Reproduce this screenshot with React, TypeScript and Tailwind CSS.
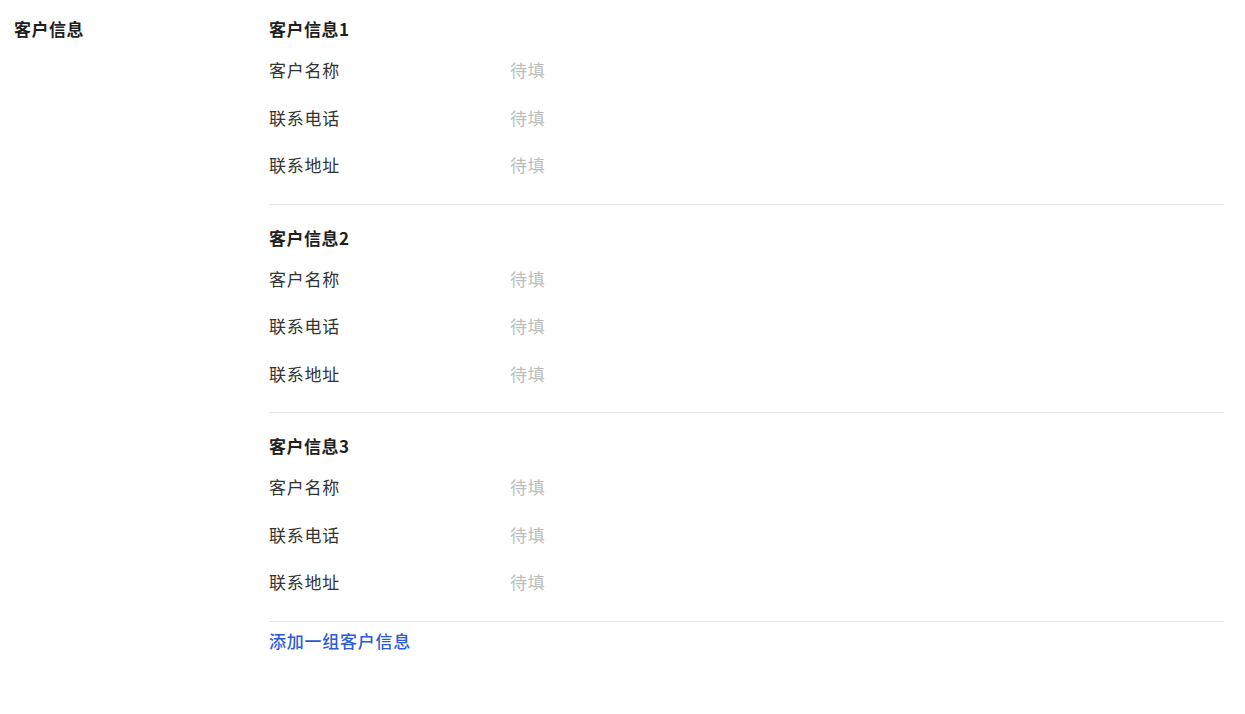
const customers = [1, 2, 3];
const fields = ["客户名称", "联系电话", "联系地址"];

export default function App() {
  return (
    <div
      className="min-h-[714px] bg-white pl-[14px] pr-[21px] pt-[17px] text-[17px]"
      style={{ fontFamily: '"Noto Sans CJK SC", "Noto Sans", sans-serif' }}
    >
      <div className="flex">
        {/* 左侧标题 */}
        <div className="w-[255px] shrink-0 h-6 leading-6 font-semibold tracking-[0.5px] text-[#1f1f1f]">
          客户信息
        </div>

        <div className="flex-1">
          {customers.map((n, i) => (
            <div
              key={n}
              className={`border-b border-[#e6e6e6] pb-[15px] ${i === 0 ? "" : "pt-[21px]"}`}
            >
              <div className="h-6 leading-6 font-semibold tracking-[0.5px] text-[#1f1f1f]">
                客户信息{n}
              </div>
              <div className="mt-[5px]">
                {fields.map((f) => (
                  <div key={f} className="flex h-[47.5px] items-center">
                    <div className="w-[241px] tracking-[0.75px] text-[#333333]">{f}</div>
                    <div className="tracking-[0.75px] text-[#bcbcbc]">待填</div>
                  </div>
                ))}
              </div>
            </div>
          ))}
          <div className="mt-[7px] h-6 leading-6 font-medium tracking-[0.75px] text-[#2a5bd7] cursor-pointer">
            添加一组客户信息
          </div>
        </div>
      </div>
    </div>
  );
}
